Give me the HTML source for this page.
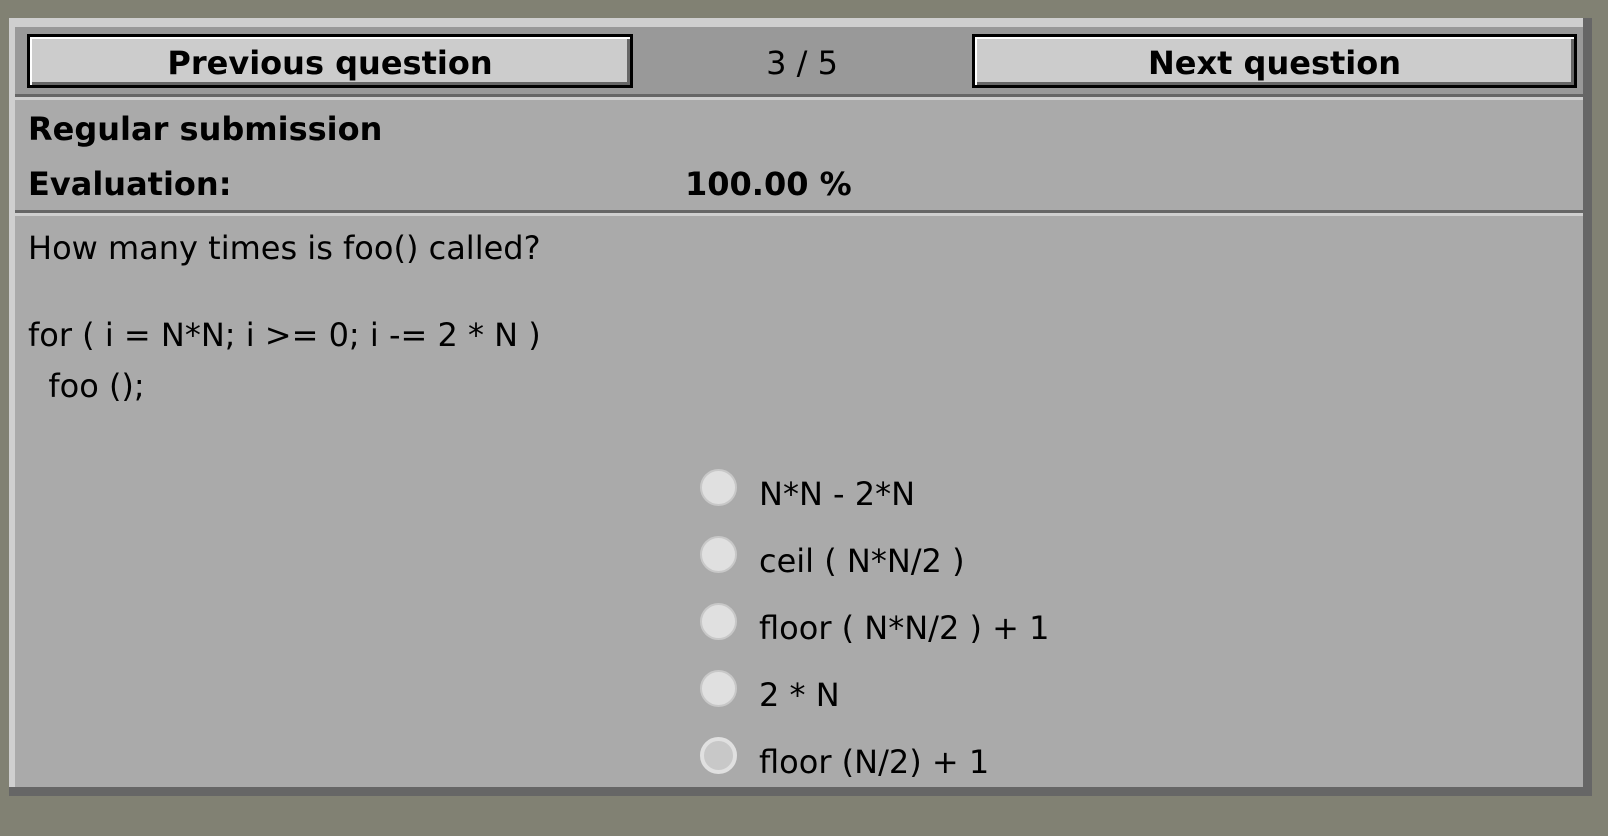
<!DOCTYPE html>
<html><head><style>
*{margin:0;padding:0;box-sizing:border-box}
body{width:1608px;height:836px;background:#818173;position:relative;overflow:hidden;font-family:"DejaVu Sans","Liberation Sans",sans-serif;color:#000}
.a{position:absolute}
.btn{position:absolute;top:34px;height:54px;background:#ccc;border:3px solid #000;box-shadow:inset 2px 2px 0 #fff,inset -3px -3px 0 #666;font-weight:bold;font-size:32px;text-align:center;line-height:52px}
.t{position:absolute;left:28px;font-size:32px;white-space:pre;line-height:40px}
.r{position:absolute;left:700px;width:37px;height:37px;border-radius:50%;background:#e0e0e0;border:2px solid #c8c8c8}
.o{position:absolute;left:759px;font-size:32px;line-height:40px;white-space:pre}
</style></head><body>
<div class="a" style="left:9px;top:18px;width:1583px;height:778px;background:#666"></div>
<div class="a" style="left:9px;top:18px;width:1574px;height:769px;background:#cfcfcf"></div>
<div class="a" style="left:15px;top:27px;width:1568px;height:760px;background:#aaa"></div>
<div class="a" style="left:15px;top:27px;width:1568px;height:67px;background:#999"></div>
<div class="a" style="left:15px;top:94px;width:1568px;height:3px;background:#666"></div>
<div class="a" style="left:15px;top:97px;width:1568px;height:3px;background:#cfcfcf"></div>
<div class="a" style="left:15px;top:210px;width:1568px;height:3px;background:#666"></div>
<div class="a" style="left:15px;top:213px;width:1568px;height:3px;background:#cfcfcf"></div>
<div class="btn" style="left:27px;width:606px">Previous question</div>
<div class="a" style="left:700px;width:204px;top:42px;text-align:center;font-size:32px;line-height:42px">3 / 5</div>
<div class="btn" style="left:972px;width:605px">Next question</div>
<div class="t" style="top:109px;font-weight:bold">Regular submission</div>
<div class="t" style="top:164px;font-weight:bold">Evaluation:</div>
<div class="t" style="top:164px;left:685px;font-weight:bold">100.00 %</div>
<div class="t" style="top:228px">How many times is foo() called?</div>
<div class="t" style="top:315px">for ( i = N*N; i &gt;= 0; i -= 2 * N )</div>
<div class="t" style="top:366px">  foo ();</div>
<div class="r" style="top:469px"></div><div class="o" style="top:474px">N*N - 2*N</div>
<div class="r" style="top:536px"></div><div class="o" style="top:541px">ceil ( N*N/2 )</div>
<div class="r" style="top:603px"></div><div class="o" style="top:608px">floor ( N*N/2 ) + 1</div>
<div class="r" style="top:670px"></div><div class="o" style="top:675px">2 * N</div>
<div class="r" style="top:737px;background:#c8c8c8;border:4px solid #e0e0e0"></div><div class="o" style="top:742px">floor (N/2) + 1</div>
</body></html>
